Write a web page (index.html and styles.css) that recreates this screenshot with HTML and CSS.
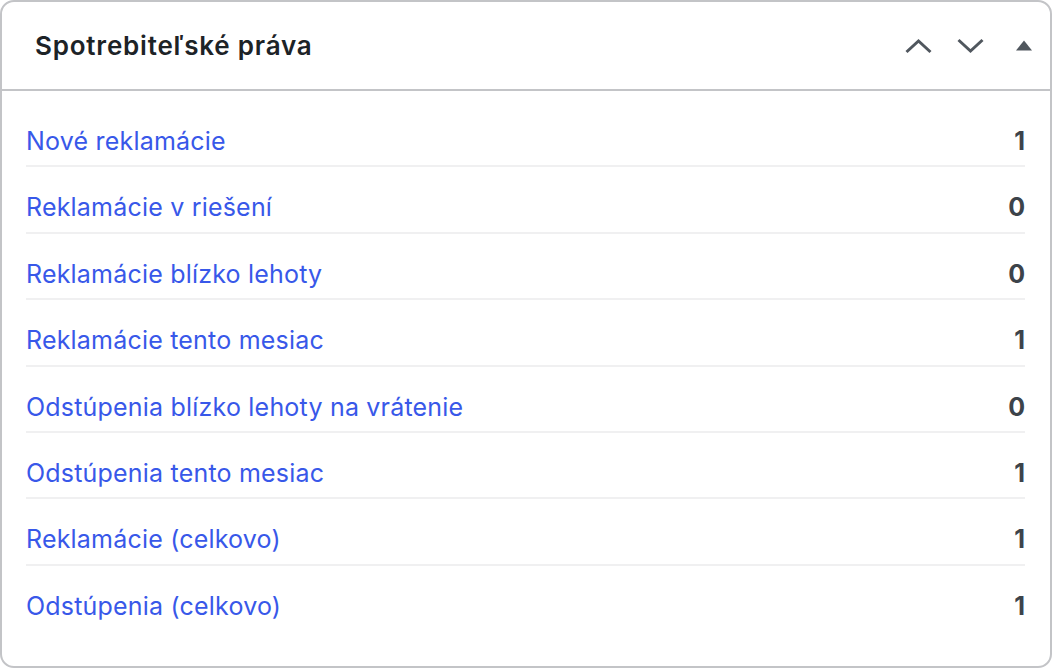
FILE: index.html
```html
<!DOCTYPE html>
<html>

<head>
    <title>Spotrebiteľské práva</title>
    <link rel="stylesheet" href="styles.css">
</head>

<body>
    <div class="postbox">
        <div class="postbox-header">
            <h2 class="postbox-title">Spotrebiteľské práva</h2>
            <div class="handle-actions">
                <button class="handle-btn" aria-label="Posunúť vyššie">
                    <svg width="27" height="16" viewBox="0 0 27 16">
                        <path d="M1.5 14 L13.5 3 L25.5 14" fill="none" stroke="#50575e" stroke-width="3"/>
                    </svg>
                </button>
                <button class="handle-btn" aria-label="Posunúť nižšie">
                    <svg width="27" height="16" viewBox="0 0 27 16">
                        <path d="M1.5 2 L13.5 13 L25.5 2" fill="none" stroke="#50575e" stroke-width="3"/>
                    </svg>
                </button>
                <button class="handle-btn toggle" aria-label="Zbaliť">
                    <svg width="16" height="11" viewBox="0 0 16 11">
                        <path d="M0 10.5 L8 0.5 L16 10.5 Z" fill="#50575e"/>
                    </svg>
                </button>
            </div>
        </div>
        <ul class="stats-list">
            <li><a href="#">Nové reklamácie</a><span class="count">1</span></li>
            <li><a href="#">Reklamácie v riešení</a><span class="count">0</span></li>
            <li><a href="#">Reklamácie blízko lehoty</a><span class="count">0</span></li>
            <li><a href="#">Reklamácie tento mesiac</a><span class="count">1</span></li>
            <li><a href="#">Odstúpenia blízko lehoty na vrátenie</a><span class="count">0</span></li>
            <li><a href="#">Odstúpenia tento mesiac</a><span class="count">1</span></li>
            <li><a href="#">Reklamácie (celkovo)</a><span class="count">1</span></li>
            <li><a href="#">Odstúpenia (celkovo)</a><span class="count">1</span></li>
        </ul>
    </div>
</body>

</html>
```

FILE: styles.css
```css
body {
    margin: 0;
    font-family: 'Inter', 'Noto Sans', sans-serif;
    background-color: #fff;
    color: #1d2327;
}

.postbox {
    width: 1052px;
    height: 668px;
    box-sizing: border-box;
    border: 2px solid #c3c4c7;
    border-radius: 14px;
    background-color: #fff;
}

.postbox-header {
    display: flex;
    align-items: center;
    justify-content: space-between;
    height: 87px;
    padding: 0 18px 0 33px;
    border-bottom: 2px solid #c3c4c7;
}

.postbox-title {
    margin: 0;
    font-size: 26px;
    font-weight: 600;
    letter-spacing: 0.8px;
    color: #1d2327;
}

.handle-actions {
    display: flex;
    align-items: center;
}

.handle-btn {
    background: none;
    border: none;
    padding: 0;
    margin-left: 25px;
    display: flex;
    cursor: pointer;
}

.handle-btn.toggle {
    margin-left: 32px;
    margin-top: -1px;
}

.stats-list {
    list-style: none;
    margin: 0;
    padding: 10px 25px 0 24px;
}

.stats-list li {
    display: flex;
    justify-content: space-between;
    padding: 27px 0 11px;
    line-height: 26.4px;
    font-size: 25px;
    border-bottom: 2px solid #f0f0f1;
}

.stats-list li:last-child {
    border-bottom: none;
}

.stats-list a {
    color: #3858e9;
    text-decoration: none;
    letter-spacing: 0.2px;
}

.count {
    font-weight: 700;
    color: #3c434a;
}
```
